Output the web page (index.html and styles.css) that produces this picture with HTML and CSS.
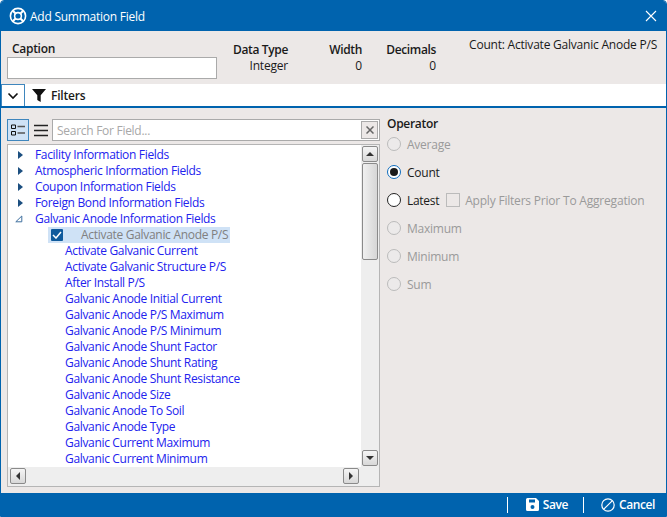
FILE: index.html
```html
<!DOCTYPE html>
<html lang="en">
<head>
<meta charset="utf-8">
<title>Add Summation Field</title>
<link rel="stylesheet" href="styles.css">
</head>
<body>
<div class="window">
  <header class="titlebar">
    <svg class="logo" width="18" height="18" viewBox="0 0 18 18"><circle cx="9" cy="9" r="7.6" fill="none" stroke="#fff" stroke-width="1.6"/><circle cx="9" cy="9" r="3.4" fill="none" stroke="#fff" stroke-width="1.6"/><path d="M3.8 3.8l3 3M14.2 3.8l-3 3M3.8 14.2l3-3M14.2 14.2l-3-3" stroke="#fff" stroke-width="2"/></svg>
    <span class="title">Add Summation Field</span>
    <svg class="close" width="12" height="12" viewBox="0 0 12 12"><path d="M1 1l10 10M11 1L1 11" stroke="#fff" stroke-width="1.1" fill="none"/></svg>
  </header>
  <section class="meta">
    <div class="caption-col">
      <label class="strong-label">Caption</label>
      <div class="caption-input"></div>
    </div>
    <div class="stat stat-type"><span>Data Type</span><span>Integer</span></div>
    <div class="stat stat-width"><span>Width</span><span>0</span></div>
    <div class="stat stat-dec"><span>Decimals</span><span>0</span></div>
    <div class="summary">Count: Activate Galvanic Anode P/S</div>
  </section>
  <section class="filterbar">
    <div class="chev"><svg width="12" height="8" viewBox="0 0 12 8"><path d="M1.5 1.5L6 6l4.500-4.500" fill="none" stroke="#111" stroke-width="1.600"/></svg></div>
    <svg class="funnel" width="14" height="14" viewBox="0 0 14 14"><path d="M0 1h14L8.700 7.300V14L5.300 12V7.300z" fill="#111"/></svg>
    <span class="filters">Filters</span>
  </section>
  <main class="body">
    <div class="left">
      <div class="toolbar">
        <div class="tool active"><svg width="14" height="12" viewBox="0 0 14 12"><path d="M0.500 1h4v3.500h-4zM0.500 7.500h4V11h-4z" fill="none" stroke="#111"/><path d="M6.500 2.500H14M6.500 9H14" stroke="#555" stroke-width="1.300"/></svg></div>
        <div class="tool plain"><svg width="14" height="13" viewBox="0 0 14 13"><path d="M0 1.500h14M0 6.500h14M0 11.500h14" stroke="#222" stroke-width="1.300"/></svg></div>
        <div class="search">
          <span class="placeholder">Search For Field...</span>
          <div class="clear"><svg width="8" height="8" viewBox="0 0 8 8"><path d="M0.500 0.500l7 7M7.500 0.500l-7 7" stroke="#666" stroke-width="1.500"/></svg></div>
        </div>
      </div>
      <div class="treebox">
        <div class="tree-main">
          <ul class="tree">
            <li class="node"><i class="arrow"></i>Facility Information Fields</li>
            <li class="node"><i class="arrow"></i>Atmospheric Information Fields</li>
            <li class="node"><i class="arrow"></i>Coupon Information Fields</li>
            <li class="node"><i class="arrow"></i>Foreign Bond Information Fields</li>
            <li class="node"><svg class="open" width="8" height="8" viewBox="0 0 8 8"><path d="M0.800 6.800L6.800 1v5.800z" fill="none" stroke="#3f6f9f"/></svg>Galvanic Anode Information Fields</li>
            <li class="selected"><span class="check"><svg width="10" height="8" viewBox="0 0 10 8"><path d="M1 4l3 3 5-6" fill="none" stroke="#fff" stroke-width="1.500"/></svg></span><span class="seltext">Activate Galvanic Anode P/S</span></li>
            <li class="leaf">Activate Galvanic Current</li>
            <li class="leaf">Activate Galvanic Structure P/S</li>
            <li class="leaf">After Install P/S</li>
            <li class="leaf">Galvanic Anode Initial Current</li>
            <li class="leaf">Galvanic Anode P/S Maximum</li>
            <li class="leaf">Galvanic Anode P/S Minimum</li>
            <li class="leaf">Galvanic Anode Shunt Factor</li>
            <li class="leaf">Galvanic Anode Shunt Rating</li>
            <li class="leaf">Galvanic Anode Shunt Resistance</li>
            <li class="leaf">Galvanic Anode Size</li>
            <li class="leaf">Galvanic Anode To Soil</li>
            <li class="leaf">Galvanic Anode Type</li>
            <li class="leaf">Galvanic Current Maximum</li>
            <li class="leaf">Galvanic Current Minimum</li>
          </ul>
          <div class="vscroll">
            <div class="sbtn"><i class="tri up"></i></div>
            <div class="vthumb"></div>
            <div class="sbtn"><i class="tri down"></i></div>
          </div>
        </div>
        <div class="hscroll">
          <div class="sbtn"><i class="tri lft"></i></div>
          <div class="sbtn"><i class="tri rgt"></i></div>
        </div>
      </div>
    </div>
    <aside class="right">
      <div class="strong-label op-title">Operator</div>
      <div class="radio-row off"><i class="radio"></i>Average</div>
      <div class="radio-row on"><i class="radio checked"></i>Count</div>
      <div class="radio-row on"><i class="radio"></i><span class="latest">Latest</span><i class="box"></i><span class="apply">Apply Filters Prior To Aggregation</span></div>
      <div class="radio-row off"><i class="radio"></i>Maximum</div>
      <div class="radio-row off"><i class="radio"></i>Minimum</div>
      <div class="radio-row off"><i class="radio"></i>Sum</div>
    </aside>
  </main>
  <footer class="footer">
    <i class="sep"></i>
    <svg width="13" height="13" viewBox="0 0 13 13"><path fill-rule="evenodd" d="M0 1.500A1.500 1.500 0 0 1 1.500 0H10l3 3v8.500a1.500 1.500 0 0 1-1.500 1.500h-10A1.500 1.500 0 0 1 0 11.500zM3 1.500V4.500h6V1.500zM6.500 7a2 2 0 1 0 0 4 2 2 0 0 0 0-4z" fill="#fff"/></svg>
    <span class="fbtn">Save</span>
    <i class="sep sep2"></i>
    <svg width="14" height="14" viewBox="0 0 14 14"><circle cx="7" cy="7" r="6.200" fill="none" stroke="#fff" stroke-width="1.200"/><path d="M2.800 11.200l8.400-8.400" stroke="#fff" stroke-width="1.200"/></svg>
    <span class="fbtn">Cancel</span>
  </footer>
</div>
</body>
</html>
```
FILE: styles.css
```css
* { box-sizing: border-box; }
html, body { margin: 0; padding: 0; }
body { width: 667px; height: 517px; overflow: hidden; background: #fff; font-family: "Open Sans", "Noto Sans", sans-serif; font-size: 12px; color: #1a1a1a; }
ul { list-style: none; margin: 0; padding: 0; }
i { display: block; }
.window { width: 667px; height: 517px; display: flex; flex-direction: column; background: #ece8e7; border: 1px solid #0063ae; border-radius: 4px 4px 0 0; overflow: hidden; }
.titlebar { height: 30px; flex: none; background: #0063ae; color: #fff; display: flex; align-items: center; padding: 0 9px 0 8px; }
.title { margin-left: 3px; font-size: 12px; letter-spacing: -0.25px; }
.close { margin-left: auto; }
.meta { height: 53px; flex: none; display: flex; position: relative; padding: 10px 0 0 6px; }
.caption-col { width: 210px; }
.strong-label { font-weight: 600; font-size: 12px; letter-spacing: -0.3px; }
.caption-col .strong-label { display: block; margin-left: 5px; line-height: 16px; }
.caption-input { height: 22px; background: #fff; border: 1px solid #aaa; }
.stat { display: flex; flex-direction: column; align-items: flex-end; line-height: 16px; letter-spacing: -0.2px; padding-top: 1px; }
.stat span:first-child { font-weight: 600; letter-spacing: -0.35px; }
.stat-type { width: 71px; }
.stat-width { width: 74px; }
.stat-dec { width: 74px; }
.summary { position: absolute; right: 9px; top: 6px; line-height: 16px; letter-spacing: -0.22px; }
.filterbar { height: 24px; flex: none; background: #fff; border-bottom: 2px solid #0063ae; display: flex; align-items: center; }
.chev { width: 24px; height: 22px; border: 1px solid #3f86bd; border-bottom: 0; margin-left: 0; display: flex; align-items: center; justify-content: center; align-self: flex-start; }
.funnel { margin-left: 7px; }
.filters { margin-left: 5px; font-weight: 600; letter-spacing: -0.2px; }
.body { flex: 1; min-height: 0; display: flex; padding: 11px 0 0 6px; }
.left { width: 373px; flex: none; display: flex; flex-direction: column; }
.toolbar { display: flex; height: 22px; }
.tool { width: 22px; display: flex; align-items: center; justify-content: center; }
.tool.active { background: #cfe2f6; border: 1px solid #3f86bd; }
.tool.plain { width: 23px; }
.search { flex: 1; background: #fff; border: 1px solid #aaa; display: flex; align-items: center; padding: 0 1px 0 4px; }
.placeholder { color: #a8a8a8; letter-spacing: -0.28px; }
.clear { margin-left: auto; width: 17px; height: 18px; background: #ece8e7; border: 1px solid #aaa; display: flex; align-items: center; justify-content: center; }
.treebox { margin-top: 3px; width: 373px; height: 343px; border: 1px solid #b5b5b5; background: #fff; display: flex; flex-direction: column; }
.tree-main { flex: 1; min-height: 0; display: flex; }
.tree { flex: 1; min-width: 0; padding-top: 2px; overflow: hidden; color: #2222ee; line-height: 16px; letter-spacing: -0.33px; }
.tree li { height: 16px; white-space: nowrap; }
.node { display: flex; align-items: center; padding-left: 10px; }
.arrow { width: 0; height: 0; border-left: 5px solid #1c4f80; border-top: 4.500px solid transparent; border-bottom: 4.500px solid transparent; margin-right: 12px; margin-left: 0; }
.open { margin-left: -3px; margin-right: 12px; }
.leaf { padding-left: 57px; }
.selected { display: flex; align-items: center; margin-left: 40px; width: 182px; background: #cfe2f6; color: #808080; padding-left: 3px; letter-spacing: -0.3px; }
.check { width: 12px; height: 12px; background: #0f5a9c; border-radius: 1px; display: flex; align-items: center; justify-content: center; }
.seltext { margin-left: 18px; }
.vscroll { width: 18px; flex: none; background: #eee; display: flex; flex-direction: column; justify-content: space-between; position: relative; padding: 1px 1px 1px 0; }
.sbtn { width: 16px; height: 16px; flex: none; border: 1px solid #8a8a8a; border-radius: 2px; background: linear-gradient(#f5f5f5, #d8d8d8); display: flex; align-items: center; justify-content: center; }
.vscroll .sbtn { margin-left: 1px; }
.vthumb { position: absolute; left: 1px; top: 18px; width: 16px; height: 97px; border: 1px solid #8a8a8a; border-radius: 2px; background: linear-gradient(90deg, #f0f0f0, #d6d6d6); }
.hscroll { height: 19px; flex: none; background: #eee; display: flex; justify-content: space-between; align-items: center; padding: 0 20px 1px 2px; }
.tri { width: 0; height: 0; }
.tri.up { border-left: 4px solid transparent; border-right: 4px solid transparent; border-bottom: 4px solid #333; }
.tri.down { border-left: 4px solid transparent; border-right: 4px solid transparent; border-top: 4px solid #333; }
.tri.lft { border-top: 4px solid transparent; border-bottom: 4px solid transparent; border-right: 4px solid #333; }
.tri.rgt { border-top: 4px solid transparent; border-bottom: 4px solid transparent; border-left: 4px solid #333; }
.right { flex: 1; padding-left: 7px; }
.op-title { line-height: 16px; margin-top: -3px; margin-bottom: -2px; }
.radio-row { height: 28px; display: flex; align-items: center; letter-spacing: -0.25px; }
.radio-row.off { color: #9a9a9a; }
.radio { width: 14px; height: 14px; border-radius: 50%; background: #fff; border: 1px solid #222; margin-right: 6px; flex: none; }
.off .radio { background: #eceaea; border-color: #bbb; }
.radio.checked { border: 1.500px solid #0f6cbd; position: relative; }
.radio.checked::after { content: ""; position: absolute; left: 1.500px; top: 1.500px; width: 8px; height: 8px; border-radius: 50%; background: #1a1a1a; }
.latest { letter-spacing: -0.3px; }
.box { width: 14px; height: 14px; border: 1px solid #bbb; margin: 0 5px 0 7px; flex: none; }
.apply { color: #9a9a9a; letter-spacing: -0.2px; }
.footer { height: 23px; flex: none; background: #0063ae; color: #fff; display: flex; align-items: center; justify-content: flex-end; padding-right: 11px; }
.sep { width: 1px; height: 16px; background: #fff; margin-right: 18px; }
.sep2 { margin-left: 15px; margin-right: 17px; }
.fbtn { font-weight: 600; margin-left: 4px; letter-spacing: -0.4px; }
```
